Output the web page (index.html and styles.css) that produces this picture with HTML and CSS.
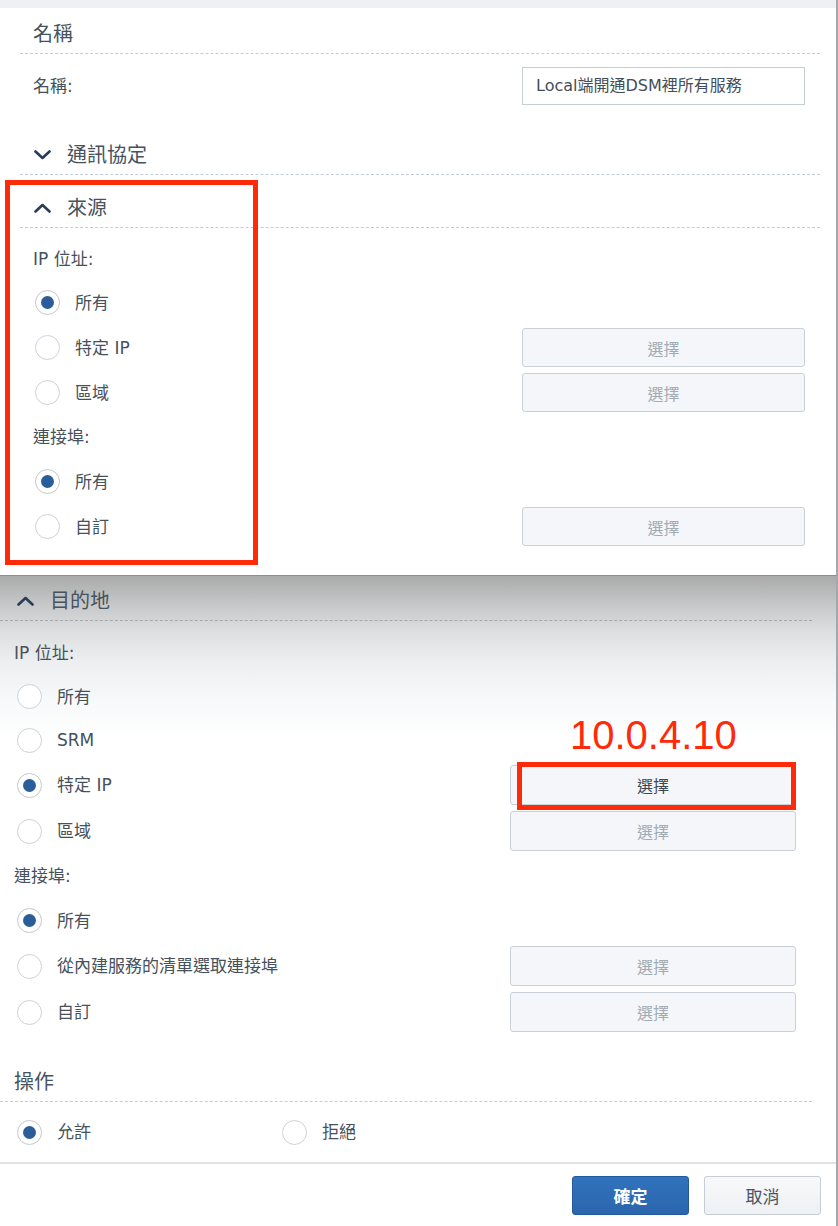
FILE: index.html
```html
<!DOCTYPE html>
<html lang="zh-Hant">
<head>
<meta charset="utf-8">
<title>防火牆規則</title>
<link rel="stylesheet" href="styles.css">
</head>
<body>
<div class="page">
  <section class="panel panel-top">
    <div class="band"></div>
    <div class="sec sec-top">
      <div class="hd hd-name"><span>名稱</span></div>
      <div class="row-name">
        <span>名稱:</span>
        <div class="input">Local端開通DSM裡所有服務</div>
      </div>
      <div class="hd hd-chev hd-proto">
        <svg class="chev" viewBox="0 0 17 10"><path d="M1.5 1.5 L8.5 8 L15.5 1.5" /></svg>
        <span>通訊協定</span>
      </div>
      <div class="hd hd-chev hd-src">
        <svg class="chev" viewBox="0 0 17 10"><path d="M1.5 8.5 L8.5 2 L15.5 8.5" /></svg>
        <span>來源</span>
      </div>
      <div class="lbl lbl-first">IP 位址:</div>
      <div class="opt first"><span class="radio on"></span><span>所有</span></div>
      <div class="opt"><span class="radio"></span><span>特定 IP</span><button class="btn">選擇</button></div>
      <div class="opt"><span class="radio"></span><span>區域</span><button class="btn">選擇</button></div>
      <div class="lbl lbl-port">連接埠:</div>
      <div class="opt"><span class="radio on"></span><span>所有</span></div>
      <div class="opt"><span class="radio"></span><span>自訂</span><button class="btn">選擇</button></div>
    </div>
  </section>

  <section class="panel panel-bottom">
    <div class="sec sec-bot">
      <div class="hd hd-chev hd-dest">
        <svg class="chev" viewBox="0 0 17 10"><path d="M1.5 8.5 L8.5 2 L15.5 8.5" /></svg>
        <span>目的地</span>
      </div>
      <div class="lbl lbl-first">IP 位址:</div>
      <div class="opt h43 first"><span class="radio"></span><span>所有</span></div>
      <div class="opt h44"><span class="radio"></span><span>SRM</span></div>
      <div class="opt h46"><span class="radio on"></span><span>特定 IP</span><button class="btn active">選擇</button></div>
      <div class="opt h46"><span class="radio"></span><span>區域</span><button class="btn">選擇</button></div>
      <div class="lbl lbl-port">連接埠:</div>
      <div class="opt h45 first"><span class="radio on"></span><span>所有</span></div>
      <div class="opt h46"><span class="radio"></span><span>從內建服務的清單選取連接埠</span><button class="btn">選擇</button></div>
      <div class="opt h46"><span class="radio"></span><span>自訂</span><button class="btn">選擇</button></div>
      <div class="hd hd-op"><span>操作</span></div>
      <div class="opt h44 action">
        <div class="choice"><span class="radio on"></span><span>允許</span></div>
        <div class="choice"><span class="radio"></span><span>拒絕</span></div>
      </div>
    </div>
    <div class="sep"></div>
    <div class="footer">
      <button class="fbtn primary">確定</button>
      <button class="fbtn">取消</button>
    </div>
  </section>

  <div class="mark mark-src"></div>
  <div class="note">10.0.4.10</div>
  <div class="mark mark-btn"></div>
</div>
</body>
</html>
```

FILE: styles.css
```css
html, body {
  margin: 0;
  padding: 0;
}

body {
  width: 838px;
  height: 1226px;
  overflow: hidden;
  background: #ffffff;
  font-family: "DejaVu Sans", "Noto Sans CJK TC", sans-serif;
  font-size: 17px;
  line-height: 24px;
  color: #46515c;
}

.page {
  position: relative;
  width: 838px;
  height: 1226px;
}

.panel {
  box-sizing: border-box;
  border-right: 2px solid #a4a8ac;
}

.panel-top {
  height: 575px;
  background: #ffffff;
}

.band {
  height: 8px;
  background: #eef0f3;
}

.sec-top {
  margin: 0 16px 0 20px;
}

.hd {
  display: flex;
  align-items: center;
  height: 38px;
  border-bottom: 1px dashed #c3ccd6;
  font-size: 20px;
  color: #47525d;
}

.hd-name {
  margin-top: 7px;
  padding-left: 13px;
}

.row-name {
  display: flex;
  align-items: center;
  height: 38px;
  padding: 13px 15px 0 13px;
}

.input {
  margin-left: auto;
  width: 283px;
  height: 38px;
  box-sizing: border-box;
  border: 1px solid #c6cdd5;
  padding-left: 13px;
  display: flex;
  align-items: center;
  font-size: 16px;
  color: #434e59;
}

.chev {
  width: 17px;
  height: 10px;
  flex: none;
  fill: none;
  stroke: #2a3d57;
  stroke-width: 2.6;
  stroke-linecap: round;
  stroke-linejoin: round;
}

.hd-proto {
  margin-top: 31px;
  padding-left: 14px;
}

.hd-src {
  margin-top: 14px;
  padding-left: 14px;
}

.hd-chev .chev {
  margin-right: 16px;
}

.lbl {
  display: flex;
  align-items: center;
  height: 32px;
  padding-left: 13px;
}

.lbl-first {
  margin-top: 15px;
}

.lbl-port {
  height: 44px;
}

.opt {
  display: flex;
  align-items: center;
  height: 45px;
  padding: 0 15px;
}

.sec-top .opt.first {
  margin-top: 5px;
}

.radio {
  flex: none;
  width: 25px;
  height: 25px;
  box-sizing: border-box;
  border: 1.5px solid #cdd2d8;
  border-radius: 50%;
  background: #ffffff;
  margin-right: 15px;
  display: flex;
  align-items: center;
  justify-content: center;
}

.radio.on {
  border-color: #c3c9cf;
}

.radio.on::after {
  content: "";
  width: 13px;
  height: 13px;
  border-radius: 50%;
  background: #2b5d9b;
}

.btn {
  margin-left: auto;
  width: 283px;
  height: 39px;
  box-sizing: border-box;
  border: 1px solid #c9d0d8;
  border-radius: 3px;
  background: #f4f6f9;
  color: #a2aab2;
  font-family: "DejaVu Sans", "Noto Sans CJK TC", sans-serif;
  font-size: 16px;
  padding: 0;
}

.btn.active {
  color: #3d4751;
}

/* bottom panel */
.panel-bottom {
  height: 651px;
  border-top: 1px solid #8c9094;
  background: linear-gradient(to bottom, #aaaaaa 0px, #c6c7c8 28px, #dcdee0 55px, #eceef0 85px, #f8f9fa 125px, #ffffff 165px);
}

.sec-bot {
  margin-right: 24px;
}

.hd-dest {
  margin-top: 6px;
  padding-left: 17px;
  border-bottom-color: #a3a8ad;
}

.sec-bot .lbl {
  padding-left: 14px;
}

.sec-bot .lbl-first {
  margin-top: 16px;
}

.sec-bot .lbl-port {
  height: 32px;
  margin-top: 6px;
}

.sec-bot .opt {
  padding: 0 16px 0 17px;
}

.sec-bot .opt.first {
  margin-top: 6px;
}

.sec-bot .btn {
  width: 286px;
  height: 40px;
}

.h43 { height: 43px; }
.h44 { height: 44px; }
.h45 { height: 45px; }
.h46 { height: 46px; }

.hd-op {
  margin-top: 28px;
  padding-left: 14px;
}

.action {
  margin-top: 8px;
}

.choice {
  display: flex;
  align-items: center;
  width: 265px;
}

.sep {
  margin-top: 8px;
  height: 2px;
  background: #dfe2e6;
}

.footer {
  display: flex;
  justify-content: flex-end;
  gap: 15px;
  padding: 12px 15px 0 0;
}

.fbtn {
  width: 117px;
  height: 39px;
  box-sizing: border-box;
  border: 1px solid #c6ccd3;
  border-radius: 3px;
  background: linear-gradient(#f7f8fa, #eef1f4);
  color: #4a545e;
  font-family: "DejaVu Sans", "Noto Sans CJK TC", sans-serif;
  font-size: 17px;
  padding: 0;
}

.fbtn.primary {
  border-color: #245a9c;
  background: linear-gradient(#3173bd, #2a66ad);
  color: #ffffff;
  font-weight: bold;
}

/* annotations */
.mark {
  position: absolute;
  box-sizing: border-box;
  border: 5px solid #fe2a0a;
}

.mark-src {
  left: 5px;
  top: 180px;
  width: 253px;
  height: 385px;
}

.mark-btn {
  left: 517px;
  top: 762px;
  width: 279px;
  height: 48px;
}

.note {
  position: absolute;
  left: 570px;
  top: 715px;
  font-family: "Liberation Sans", Arial, sans-serif;
  font-size: 40px;
  line-height: 40px;
  color: #fe2a0a;
}
```
